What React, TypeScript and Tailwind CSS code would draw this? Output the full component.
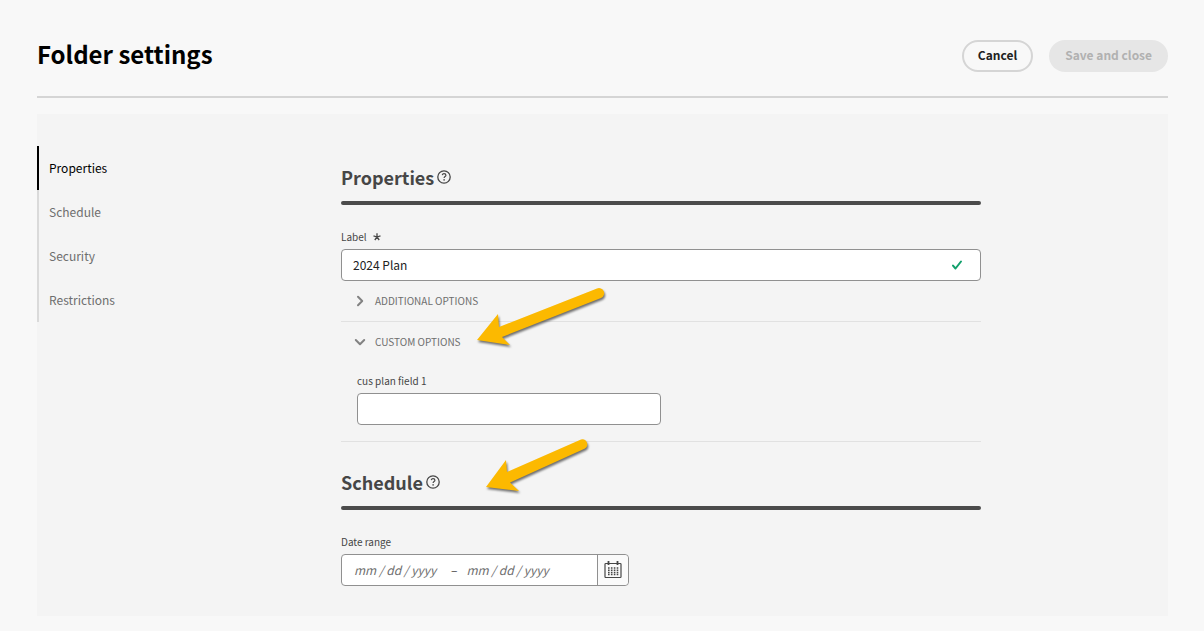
import { useState, type ReactNode } from 'react';

const sections = ['Properties', 'Schedule', 'Security', 'Restrictions'];

function HelpIcon() {
  return (
    <svg viewBox="0 0 14 14" className="size-3.5" fill="none" stroke="#464646" aria-hidden="true">
      <circle cx="7" cy="7" r="6.2" strokeWidth="1.3" />
      <path d="M5.2 5.1C5.5 4.1 6.2 3.7 7 3.7c1.1 0 1.9.6 1.9 1.5 0 1.3-1.8 1.4-1.8 2.9" strokeWidth="1.2" />
      <circle cx="7.1" cy="9.9" r=".8" fill="#464646" stroke="none" />
    </svg>
  );
}

function SectionHeading({ id, children }: { id: string; children: ReactNode }) {
  return (
    <div>
      <div className="flex h-7 items-center gap-[3px]">
        <h2 id={id} className="text-[18px] leading-7 font-bold text-[#464646]">{children}</h2>
        <button type="button" aria-label={`Help: ${id}`}>
          <HelpIcon />
        </button>
      </div>
      <div className="mt-2.5 h-1 rounded-sm bg-[#4b4b4b]" />
    </div>
  );
}

function Chevron({ open }: { open: boolean }) {
  return (
    <svg viewBox="0 0 12 12" className="size-3" fill="none" stroke="#828282" strokeWidth="2" strokeLinecap="round" strokeLinejoin="round" aria-hidden="true">
      <path d={open ? 'M1.8 4 6 8.2 10.2 4' : 'M4 1.8 8.2 6 4 10.2'} />
    </svg>
  );
}

function AccordionItem({ title, defaultOpen = false, children }: { title: string; defaultOpen?: boolean; children?: ReactNode }) {
  const [open, setOpen] = useState(defaultOpen);
  return (
    <div className="border-b border-[#e1e1e1]">
      <button
        type="button"
        aria-expanded={open}
        onClick={() => setOpen(!open)}
        className="flex h-10 w-full items-center gap-2 pl-3 text-[10px] leading-4 text-[#6e6e6e] uppercase"
      >
        <span className="flex w-3.5 justify-center">
          <Chevron open={open} />
        </span>
        {title}
      </button>
      {open && children}
    </div>
  );
}

function CalendarIcon() {
  return (
    <svg viewBox="0 0 18 18" className="size-[18px]" fill="none" stroke="#464646" aria-hidden="true">
      <rect x="1" y="2.5" width="16" height="14" rx=".8" strokeWidth="1.2" />
      <path d="M4.5 0v4M13.5 0v4" strokeWidth="1.8" />
      <path d="M4 7h10.5M4 9.2h10.5M4 11.4h10.5M4 13.6h10.5" strokeWidth="1.5" strokeDasharray="1.6 1.3" />
    </svg>
  );
}

export default function App() {
  const [active, setActive] = useState('Properties');
  return (
    <div className="min-h-screen bg-[#f8f8f8] pt-10 pr-9 pb-4 pl-[37px] font-['Noto_Sans_CJK_SC','Noto_Sans',sans-serif] text-xs leading-4 text-[#222222]">
      <header className="flex items-start justify-between border-b-2 border-[#d5d5d5] pb-6">
        <h1 className="text-2xl leading-7 font-bold text-black">Folder settings</h1>
        <div className="flex gap-4">
          <button type="button" className="h-8 rounded-full border-2 border-[#d5d5d5] px-3.5 pb-0.5 font-bold text-[#222222]">
            Cancel
          </button>
          <button type="button" disabled className="h-8 rounded-full bg-[#e6e6e6] px-4 pb-0.5 font-bold text-[#b1b1b1]">
            Save and close
          </button>
        </div>
      </header>

      <main className="mt-4 flex bg-[#f4f4f4] pb-[30px]">
        <nav aria-label="Sections" className="mt-8 w-76 shrink-0">
          {sections.map((name) => (
            <a
              key={name}
              href={`#${name}`}
              onClick={() => setActive(name)}
              className={
                'flex h-11 items-center border-l-2 pl-2.5 ' +
                (active === name ? 'border-black text-black' : 'border-[#dadada] text-[#6e6e6e]')
              }
            >
              {name}
            </a>
          ))}
        </nav>

        <form className="relative mt-[49px] max-w-[640px] min-w-0 flex-1">
          <SectionHeading id="Properties">Properties</SectionHeading>

          <label htmlFor="label" className="mt-6 mb-1 flex gap-1.5 text-[10px] text-[#464646]">
            Label
            <svg viewBox="0 0 8 8" className="mt-1 size-2" stroke="#464646" strokeWidth="1.3" aria-hidden="true">
              <path d="M4 4V.3M4 4 .5 2.9M4 4l3.5-1.1M4 4 1.8 7M4 4l2.2 3" />
            </svg>
          </label>
          <div className="flex h-8 items-center rounded border border-[#909090] bg-white pr-[17px]">
            <input id="label" required defaultValue="2024 Plan" className="h-full min-w-0 flex-1 bg-transparent px-[11px] pb-0.5 text-[#222222] outline-none" />
            <svg viewBox="0 0 12 12" className="size-3" fill="none" stroke="#12a06c" strokeWidth="2" strokeLinecap="round" strokeLinejoin="round" aria-hidden="true">
              <path d="M2 6.6 4.5 9.5 10 2.5" />
            </svg>
          </div>

          <AccordionItem title="Additional options" />
          <AccordionItem title="Custom options" defaultOpen>
            <div className="px-4 pt-[11px] pb-4">
              <label htmlFor="custom-field" className="mb-1 block text-[10px] text-[#464646]">cus plan field 1</label>
              <input id="custom-field" className="block h-8 w-1/2 rounded border border-[#909090] bg-white px-3 outline-none" />
            </div>
          </AccordionItem>

          <div className="mt-[26px]">
            <SectionHeading id="Schedule">Schedule</SectionHeading>
          </div>

          <label htmlFor="start-date" className="mt-6 mb-1 block text-[10px] text-[#464646]">Date range</label>
          <div className="flex h-8 w-72 rounded border border-[#909090] bg-white">
            <div className="flex flex-1 items-center gap-[9px] pl-3">
              <input id="start-date" placeholder="mm / dd / yyyy" className="w-[88px] bg-transparent italic outline-none placeholder:text-[#6e6e6e]" />
              <span className="text-[#464646]">–</span>
              <input aria-label="End date" placeholder="mm / dd / yyyy" className="w-[88px] bg-transparent italic outline-none placeholder:text-[#6e6e6e]" />
            </div>
            <button type="button" aria-label="Open calendar" className="flex w-[31px] items-center justify-center rounded-r border-l border-[#909090] bg-[#fafafa]">
              <CalendarIcon />
            </button>
          </div>

          <svg viewBox="0 0 140 75" className="pointer-events-none absolute top-[117px] left-32 h-[75px] w-[140px] overflow-visible drop-shadow-[1px_2px_1px_rgba(0,0,0,0.55)]" fill="#fcb900" aria-hidden="true">
            <path d="M8 60 29 34 30 47 128 8.5A5 5 0 0 1 132 18L33 57 41 65Z" />
          </svg>
          <svg viewBox="0 0 140 75" className="pointer-events-none absolute top-[267px] left-[138px] h-[75px] w-[140px] overflow-visible drop-shadow-[1px_2px_1px_rgba(0,0,0,0.55)]" fill="#fcb900" aria-hidden="true">
            <path d="M7 57 27 30 28 42 102 9.5A5 5 0 0 1 106 18.5L31 52.5 40 61Z" />
          </svg>
        </form>
      </main>
    </div>
  );
}
